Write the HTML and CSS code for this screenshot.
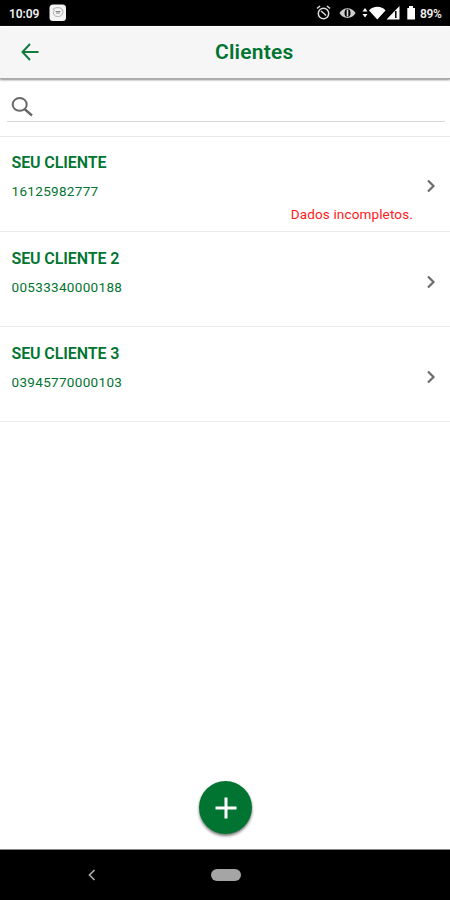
FILE: index.html
```html
<!DOCTYPE html>
<html lang="pt-BR">
<head>
<meta charset="utf-8">
<title>Clientes</title>
<link rel="stylesheet" href="styles.css">
</head>
<body>
<div class="status">
  <span class="time">10:09</span>
  <svg class="app-icon" width="18" height="18" viewBox="0 0 18 18"><rect x=".5" y=".5" width="16.5" height="16.5" rx="3.5" fill="#f4f4f4"/><path d="M4 4.500 5.500 7M4.500 5C7 3 12 3 13.500 6c1.500 4-2 7-5 6.500-3 0-4.500-2.500-4-5" fill="none" stroke="#aaa" stroke-width="1"/><path d="M6.500 7.500h5M7 9h4" stroke="#888"/></svg>
  <svg class="status-icons" width="103" height="18" viewBox="0 0 103 18">
    <g fill="none" stroke="#ddd" stroke-width="1.500"><circle cx="7.500" cy="9.500" r="5.200"/><path d="M1 4.500 4 2M11 2l3 2.500M5 7l3 2.500 2 2"/></g>
    <path d="M23.500 9C27 2.500 36 2.500 39.500 9 36 15.500 27 15.500 23.500 9Z" fill="#ccc"/><ellipse cx="31.500" cy="9" rx="3" ry="4" fill="#000"/><path d="M31.500 5.500v7" stroke="#ddd" stroke-width="1.600"/>
    <path d="M46.500 7.500 49 4l2.500 3.500ZM46.500 10h5L49 13.500ZM53 6.500C57 1.500 66 1.500 69.500 6.500L61.300 15.500ZM70.500 15.500 83.500 2v13.500Z" fill="#fff"/><path d="M79.800 7v7" stroke="#000" stroke-width="1.500"/>
    <path d="M91.300 4H93V2h4v2h2v11.500h-7.700Z" fill="#fff"/>
  </svg>
  <span class="battery">89%</span>
</div>
<header class="header">
  <svg class="back" width="20" height="20" viewBox="0 0 20 20"><path d="M18.500 10H3M10 2 2.500 10 10 18" fill="none" stroke="#147a3b" stroke-width="2"/></svg>
  <h1 class="title">Clientes</h1>
</header>
<main class="content">
  <div class="search"><svg width="24" height="24" viewBox="0 0 24 24"><ellipse cx="8.700" cy="8.400" rx="7" ry="6.400" fill="none" stroke="#686868" stroke-width="2"/><path d="m13.500 13 7.500 6.500" stroke="#686868" stroke-width="2.400"/></svg></div>
  <div class="list">
    <div class="row">
      <div class="name">SEU CLIENTE</div><div class="doc">16125982777</div>
      <svg class="chevron" width="12" height="16" viewBox="0 0 12 16"><path d="m3 2.500 5.500 5.500L3 13.500" fill="none" stroke="#6c6c6c" stroke-width="2.200"/></svg>
      <div class="warning">Dados incompletos.</div>
    </div>
    <div class="row">
      <div class="name">SEU CLIENTE 2</div><div class="doc">00533340000188</div>
      <svg class="chevron" width="12" height="16" viewBox="0 0 12 16"><path d="m3 2.500 5.500 5.500L3 13.500" fill="none" stroke="#6c6c6c" stroke-width="2.200"/></svg>
    </div>
    <div class="row">
      <div class="name">SEU CLIENTE 3</div><div class="doc">03945770000103</div>
      <svg class="chevron" width="12" height="16" viewBox="0 0 12 16"><path d="m3 2.500 5.500 5.500L3 13.500" fill="none" stroke="#6c6c6c" stroke-width="2.200"/></svg>
    </div>
  </div>
  <div class="fab"><svg width="22" height="22" viewBox="0 0 22 22"><path d="M11 .500v21M.500 11h21" stroke="#fff" stroke-width="3"/></svg></div>
</main>
<footer class="navbar">
  <svg class="nav-back" width="10" height="14" viewBox="0 0 10 14"><path d="M7.500 2 2.500 7l5 5" fill="none" stroke="#aaa" stroke-width="1.700"/></svg>
  <span class="pill"></span>
</footer>
</body>
</html>
```
FILE: styles.css
```css
* { box-sizing: border-box; }
body {
  margin: 0;
  height: 900px;
  display: flex;
  flex-direction: column;
  overflow: hidden;
  background: #fff;
  font-family: Roboto, sans-serif;
  color: #007430;
}
svg { display: block; flex: none; }
.status {
  height: 26px;
  flex: none;
  display: flex;
  align-items: center;
  padding: 0 7px 0 9px;
  background: #000;
  color: #eee;
  font-size: 12px;
  font-weight: 600;
}
.time { width: 40px; padding-top: 1px; letter-spacing: -.1px; }
.status-icons { margin-left: auto; }
.battery { flex: none; width: 24px; padding: 2px 0 0 1px; letter-spacing: -.3px; }
.header {
  height: 53px;
  flex: none;
  display: flex;
  align-items: center;
  background: #f6f6f6;
  border-top: 1px solid #fff;
  border-bottom: 1px solid #aaa;
  box-shadow: 0 1px 2px #888;
}
.back { margin: 0 0 2px 20px; }
.title {
  margin: 0 0 0 175px;
  font-size: 21px;
  line-height: 25px;
  font-weight: 600;
  letter-spacing: .2px;
}
.content { flex: 1; display: flex; flex-direction: column; }
.search {
  height: 43px;
  margin: 0 5px 0 7px;
  padding: 17px 0 0 4px;
  border-bottom: 1px solid #d8d8d8;
}
.list { margin-top: 14px; border-top: 1px solid #e8e8e8; }
.row {
  height: 95.300px;
  display: grid;
  grid-template-columns: 1fr 12px;
  grid-template-rows: 20px 20px 1fr;
  row-gap: 8px;
  padding: 16px 13px 8px 11.500px;
  border-bottom: 1px solid #ebebeb;
}
.row:first-child { height: 94.500px; }
.row + .row { padding-top: 17px; }
.name { font-size: 16px; line-height: 20px; font-weight: 600; letter-spacing: -.1px; }
.doc { grid-column: 1; font-size: 13.500px; line-height: 20px; letter-spacing: .320px; }
.chevron { grid-column: 2; grid-row: 1 / 4; margin-top: 25px; }
.warning {
  grid-column: 1;
  grid-row: 3;
  justify-self: end;
  margin: -5px 12px 0 0;
  font-size: 13.500px;
  line-height: 20px;
  letter-spacing: .140px;
  color: #ff2020;
}
.fab {
  width: 53px;
  height: 53px;
  margin: auto auto 15px 199px;
  display: grid;
  place-items: center;
  border-radius: 50%;
  background: #007430;
  box-shadow: 0 2px 3px #777;
}
.navbar {
  height: 51px;
  flex: none;
  display: flex;
  align-items: center;
  border-top: 1px solid #888;
  background: #000;
}
.nav-back { margin-left: 87px; }
.pill { width: 30px; height: 12px; margin-left: 114px; border-radius: 6px; background: #a5a5a5; }
```
